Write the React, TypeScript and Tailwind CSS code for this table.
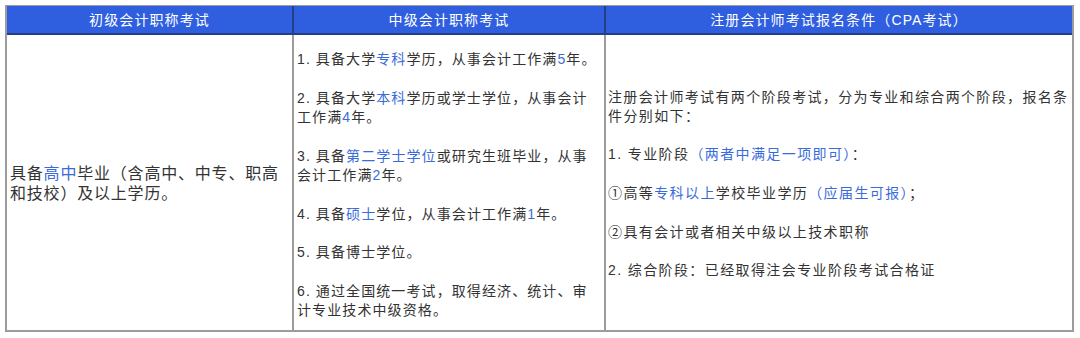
import React from "react";

const B = ({ children }: { children: React.ReactNode }) => (
  <span className="text-[#3a6bdb]">{children}</span>
);

const heads = ["初级会计职称考试", "中级会计职称考试", "注册会计师考试报名条件（CPA考试）"];

export default function App() {
  return (
    <div className="min-h-[338px] bg-white pt-[5px] pl-[5px] font-['Liberation_Sans','Noto_Sans_CJK_SC',sans-serif] text-[#333]">
      <div className="w-[1069px] border-2 border-t border-[#9c9c9c]">
        {/* header */}
        <div className="grid h-[29px] grid-cols-[287px_312px_1fr] border-b-2 border-[#243f86] bg-[#2f5fdf] text-[14px] tracking-[1.1px] text-white">
          {heads.map((h, i) => (
            <div
              key={h}
              className={`flex items-center justify-center pt-[2px] ${i < 2 ? "border-r-2 border-[#243f86]" : ""}`}
            >
              {h}
            </div>
          ))}
        </div>

        {/* body */}
        <div className="grid h-[295px] grid-cols-[287px_312px_1fr]">
          <div className="flex items-center border-r-2 border-[#9c9c9c] pl-[3px] pt-[2px] text-[16px] leading-[20px] tracking-[0.8px]">
            <p>
              具备<B>高中</B>毕业（含高中、中专、职高
              <br />
              和技校）及以上学历。
            </p>
          </div>

          <div className="flex flex-col justify-center gap-[19.3px] border-r-2 border-[#9c9c9c] pl-[3px] pt-[6px] text-[14px] leading-[19.3px] tracking-[1.1px]">
            <p>
              1. 具备大学<B>专科</B>学历，从事会计工作满<B>5</B>年。
            </p>
            <p>
              2. 具备大学<B>本科</B>学历或学士学位，从事会计
              <br />
              工作满<B>4</B>年。
            </p>
            <p>
              3. 具备<B>第二学士学位</B>或研究生班毕业，从事
              <br />
              会计工作满<B>2</B>年。
            </p>
            <p>
              4. 具备<B>硕士</B>学位，从事会计工作满<B>1</B>年。
            </p>
            <p>5. 具备博士学位。</p>
            <p>
              6. 通过全国统一考试，取得经济、统计、审
              <br />
              计专业技术中级资格。
            </p>
          </div>

          <div className="flex flex-col justify-center gap-[19.3px] pl-[2px] pr-[4px] pt-[3px] text-[14px] leading-[19.3px] tracking-[1.4px]">
            <p>
              <span className="block tracking-[0.9px] [text-align-last:justify]">
                注册会计师考试有两个阶段考试，分为专业和综合两个阶段，报名条
              </span>
              件分别如下：
            </p>
            <p>
              1. 专业阶段<B>（两者中满足一项即可）</B>：
            </p>
            <p>
              ①高等<B>专科以上</B>学校毕业学历<B>（应届生可报）</B>；
            </p>
            <p>②具有会计或者相关中级以上技术职称</p>
            <p>2. 综合阶段：已经取得注会专业阶段考试合格证</p>
          </div>
        </div>
      </div>
    </div>
  );
}
